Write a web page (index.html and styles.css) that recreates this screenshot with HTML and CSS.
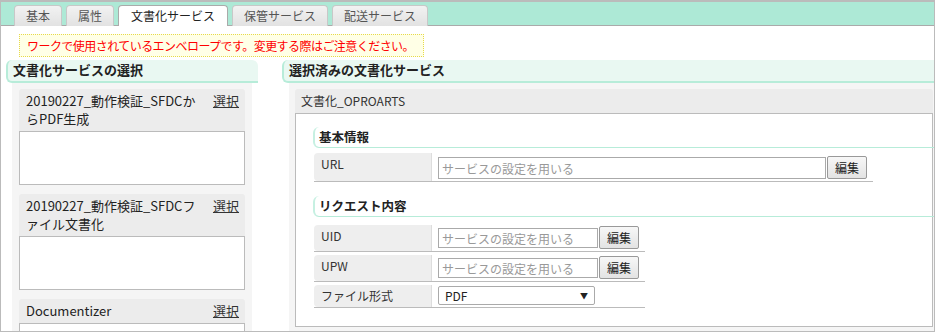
FILE: index.html
```html
<!DOCTYPE html>
<html lang="ja">
<head>
  <meta charset="UTF-8" />
  <title>エンベロープ編集</title>
  <link rel="stylesheet" href="styles.css">
</head>
<body>
  <div class="page">
    <div class="tabbar">
      <div class="tab">基本</div>
      <div class="tab">属性</div>
      <div class="tab active">文書化サービス</div>
      <div class="tab">保管サービス</div>
      <div class="tab">配送サービス</div>
    </div>

    <div class="content">
      <div class="notice">ワークで使用されているエンベロープです。変更する際はご注意ください。</div>

      <div class="columns">
        <div class="col col-left">
          <h2 class="heading">文書化サービスの選択</h2>
          <div class="panel">
            <div class="card">
              <div class="card-head">
                <span class="card-name">20190227_動作検証_SFDCからPDF生成</span>
                <a class="pick" href="#">選択</a>
              </div>
              <div class="card-body"></div>
            </div>
            <div class="card">
              <div class="card-head">
                <span class="card-name">20190227_動作検証_SFDCファイル文書化</span>
                <a class="pick" href="#">選択</a>
              </div>
              <div class="card-body"></div>
            </div>
            <div class="card">
              <div class="card-head">
                <span class="card-name">Documentizer</span>
                <a class="pick" href="#">選択</a>
              </div>
              <div class="card-body"></div>
            </div>
          </div>
        </div>

        <div class="col col-right">
          <h2 class="heading">選択済みの文書化サービス</h2>
          <div class="panel panel-right">
            <div class="svc">
              <div class="svc-head">文書化_OPROARTS</div>
              <div class="svc-body">
                <h3 class="subheading">基本情報</h3>
                <div class="field field-url">
                  <div class="label">URL</div>
                  <div class="value">
                    <input class="text text-url" type="text" placeholder="サービスの設定を用いる">
                    <button class="btn">編集</button>
                  </div>
                </div>

                <h3 class="subheading">リクエスト内容</h3>
                <div class="field">
                  <div class="label">UID</div>
                  <div class="value">
                    <input class="text" type="text" placeholder="サービスの設定を用いる">
                    <button class="btn">編集</button>
                  </div>
                </div>
                <div class="field">
                  <div class="label">UPW</div>
                  <div class="value">
                    <input class="text" type="text" placeholder="サービスの設定を用いる">
                    <button class="btn">編集</button>
                  </div>
                </div>
                <div class="field">
                  <div class="label">ファイル形式</div>
                  <div class="value">
                    <div class="select"><span>PDF</span><span class="arrow">▼</span></div>
                  </div>
                </div>
              </div>
            </div>
          </div>
        </div>
      </div>
    </div>
  </div>
</body>
</html>
```

FILE: styles.css
```css
* {
  box-sizing: border-box;
}

body {
  margin: 0;
  background: #fff;
  color: #333;
  font-family: "Noto Sans CJK JP", "Noto Sans", sans-serif;
  font-size: 12px;
  overflow: hidden;
}

.page {
  width: 935px;
  height: 332px;
  border: 1px solid #bbb;
  border-top-width: 2px;
  display: flex;
  flex-direction: column;
  overflow: hidden;
}

/* tabs */
.tabbar {
  display: flex;
  gap: 4px;
  height: 24px;
  padding: 3px 0 0 13px;
  background: #ade9d6;
  border-bottom: 1px solid #aaa;
}

.tab {
  height: 21px;
  padding: 0 11px;
  line-height: 19px;
  color: #555;
  background: linear-gradient(#f2f2f2, #e2e2e2);
  border: 1px solid #c8c8c8;
  border-bottom: none;
  border-radius: 4px 4px 0 0;
}

.tab.active {
  background: #fff;
  color: #222;
  border-color: #aaa;
  padding: 0 12px;
}

.content {
  flex: 1;
  display: flex;
  flex-direction: column;
  min-height: 0;
}

.notice {
  align-self: flex-start;
  margin: 8px 0 0 18px;
  padding: 0 7px;
  height: 23px;
  line-height: 21px;
  width: 405px;
  color: #f00;
  letter-spacing: -0.55px;
  background: #ffffe6;
  border: 1px dotted #e6d94c;
}

/* columns */
.columns {
  flex: 1;
  display: flex;
  gap: 24px;
  margin-top: 3px;
  padding-left: 5px;
  min-height: 0;
}

.col {
  display: flex;
  flex-direction: column;
}

.col-left {
  width: 252px;
}

.col-right {
  flex: 1;
}

.heading {
  margin: 0;
  height: 23px;
  padding-left: 5px;
  line-height: 20px;
  font-size: 13px;
  font-weight: bold;
  color: #222;
  background: #e9f8f2;
  border-left: 2px solid #b7ecd9;
  border-bottom: 2px solid #b7ecd9;
  border-radius: 6px 6px 0 6px;
}

.col-right .heading {
  border-radius: 6px 0 0 6px;
}

.panel {
  flex: 1;
  margin: 0 6px;
  padding: 6px 7px;
  background: #f5f5f5;
  overflow: hidden;
}

.panel-right {
  display: flex;
  margin: 0 0 0 7px;
  padding: 6px 1px 4px 6px;
}

/* service cards */
.card {
  margin-bottom: 9px;
}

.card-head {
  display: flex;
  gap: 10px;
  padding: 3px 6px 3px 7px;
  line-height: 18px;
  font-size: 13px;
  color: #222;
  background: #ececec;
  border-radius: 3px 3px 0 0;
}

.card-name {
  flex: 1;
  word-break: break-all;
}

.pick {
  color: #333;
  text-decoration: underline;
}

.card-body {
  height: 54px;
  background: #fff;
  border: 1px solid #bbb;
}

/* selected service */
.svc {
  flex: 1;
  display: flex;
  flex-direction: column;
}

.svc-head {
  height: 24px;
  padding-left: 6px;
  line-height: 24px;
  background: #ececec;
  border-radius: 3px 3px 0 0;
}

.svc-body {
  flex: 1;
  padding: 13px 0 0 17px;
  background: #fff;
  border: 1px solid #bbb;
}

.subheading {
  margin: 0 -2px 5px 0;
  height: 21px;
  padding-left: 4px;
  line-height: 19px;
  font-size: 12.5px;
  font-weight: bold;
  color: #222;
  border-left: 2px solid #c6f0e2;
  border-bottom: 1px solid #b7ecd9;
  border-radius: 6px 0 0 6px;
}

.field + .subheading {
  margin-top: 14px;
  margin-bottom: 8px;
}

.field {
  display: flex;
  width: 331px;
  margin-left: 1px;
  margin-bottom: 3px;
  border-bottom: 1px solid #bbb;
}

.field-url {
  width: 559px;
}

.label {
  width: 118px;
  padding: 3px 7px 0;
  line-height: 16px;
  background: #eee;
  border-right: 1px solid #ddd;
  border-radius: 4px 0 0 4px;
}

.value {
  flex: 1;
  display: flex;
  align-items: flex-start;
  padding: 1px 6px 2px;
}

.field-url .value {
  padding-top: 3px;
}

.text {
  width: 160px;
  height: 20px;
  margin-top: 2px;
  padding: 0 3px;
  font: inherit;
  font-size: 12px;
  border: 1px solid #aaa;
  border-radius: 0;
}

.text::placeholder {
  color: #999;
}

.text-url {
  width: 388px;
  height: 22px;
  margin-top: 1px;
}

.btn {
  width: 40px;
  height: 23px;
  margin-left: 1px;
  padding: 0;
  font: inherit;
  font-size: 12px;
  color: #222;
  background: linear-gradient(#f7f7f7, #e3e3e3);
  border: 1px solid #999;
  border-radius: 2px;
}

.select {
  display: flex;
  justify-content: space-between;
  width: 157px;
  height: 19px;
  padding: 0 6px;
  line-height: 17px;
  color: #222;
  background: #fff;
  border: 1px solid #aaa;
  border-radius: 2px;
}

.arrow {
  font-size: 8px;
}
```
